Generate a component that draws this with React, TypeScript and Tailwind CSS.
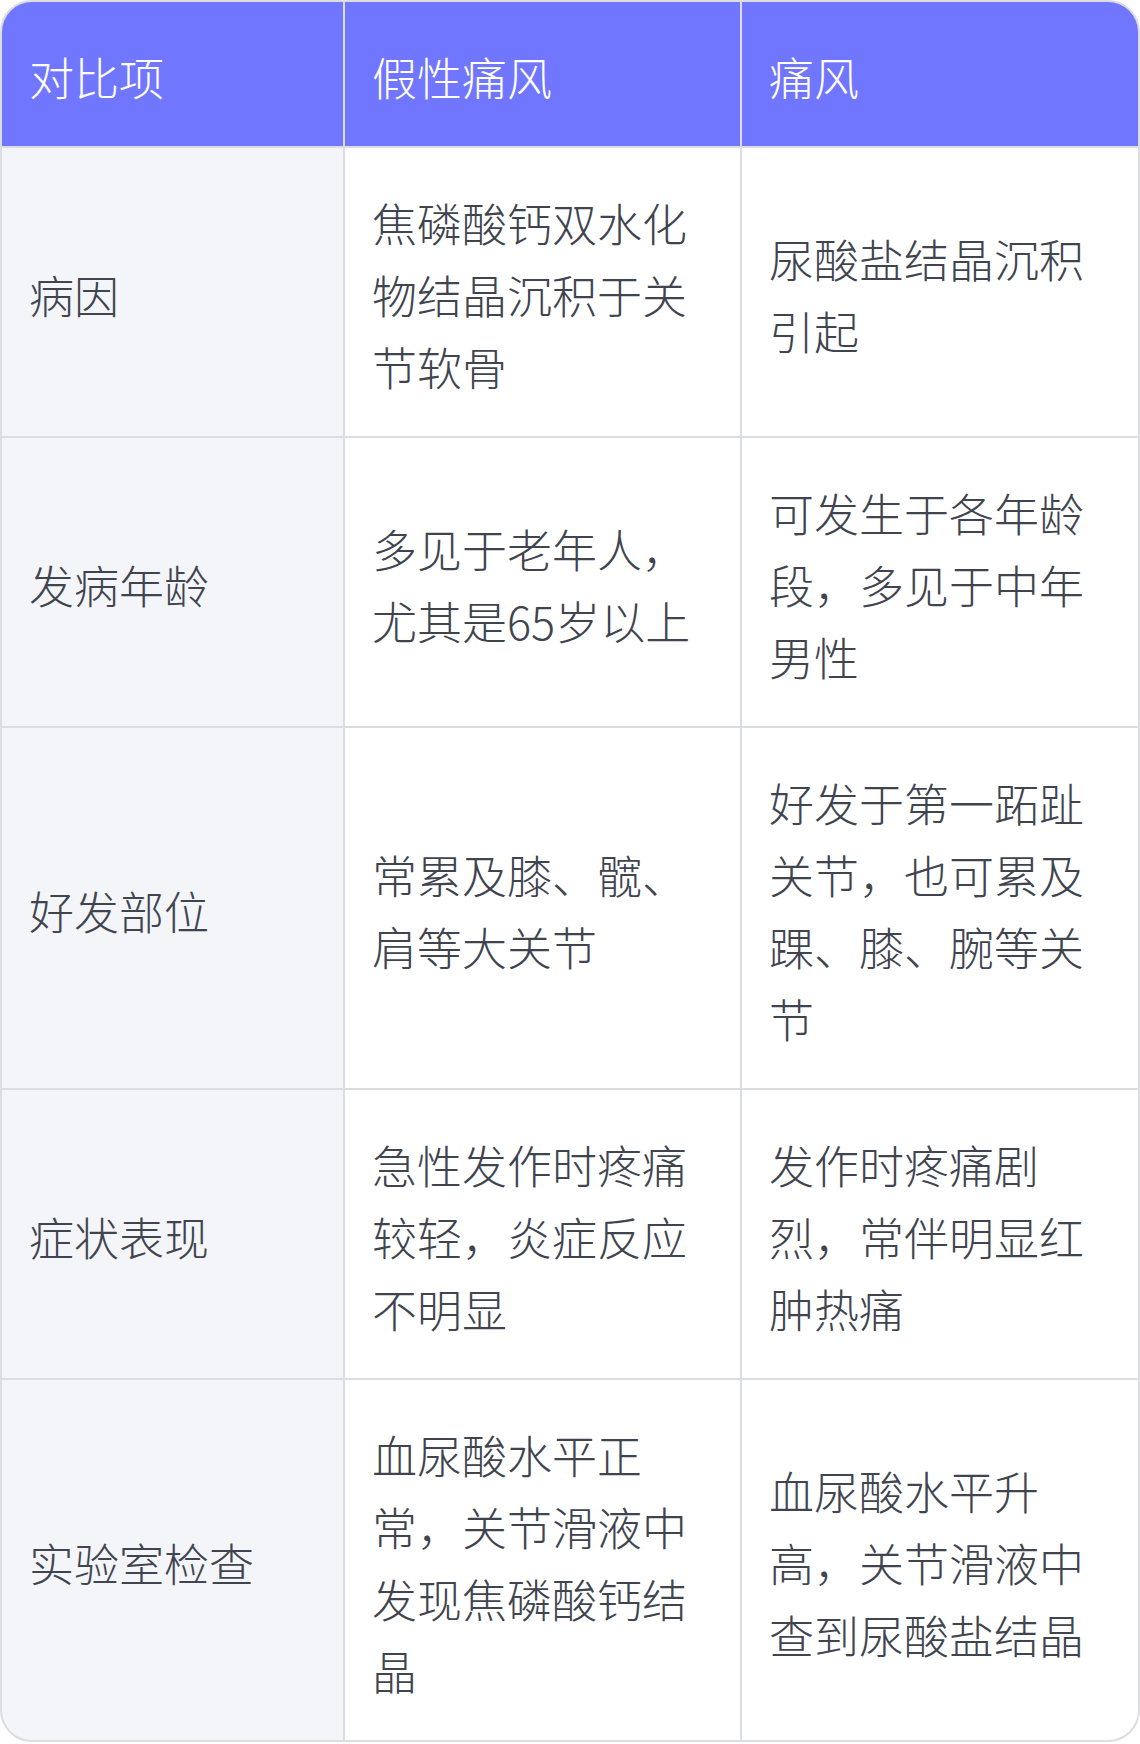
const rows: Array<[string, string, string]> = [
  ['病因', '焦磷酸钙双水化物结晶沉积于关节软骨', '尿酸盐结晶沉积引起'],
  ['发病年龄', '多见于老年人，尤其是65岁以上', '可发生于各年龄段，多见于中年男性'],
  ['好发部位', '常累及膝、髋、肩等大关节', '好发于第一跖趾关节，也可累及踝、膝、腕等关节'],
  ['症状表现', '急性发作时疼痛较轻，炎症反应不明显', '发作时疼痛剧烈，常伴明显红肿热痛'],
  ['实验室检查', '血尿酸水平正常，关节滑液中发现焦磷酸钙结晶', '血尿酸水平升高，关节滑液中查到尿酸盐结晶'],
];

const headers = ['对比项', '假性痛风', '痛风'];

export default function App() {
  return (
    <div className="w-[1140px] bg-white font-['Noto_Sans_CJK_SC',sans-serif] text-[45px] font-light leading-[72px]">
      <div className="grid grid-cols-[341px_395px_396px] gap-[2px] overflow-hidden rounded-[32px] border-2 border-[#dcdde2] bg-[#dcdde2]">
        {headers.map((h) => (
          <div key={h} className="flex items-center bg-[#7176ff] pl-[27px] pr-[28px] pt-[39px] pb-[33px] text-white">
            {h}
          </div>
        ))}
        {rows.map(([item, pseudo, gout]) => (
          <div key={item} className="contents">
            <div className="flex items-center bg-[#f4f5f9] pl-[27px] pr-[28px] pt-[39px] pb-[33px] text-[#40444f]">{item}</div>
            <div className="flex items-center bg-white pl-[27px] pr-[28px] pt-[39px] pb-[33px] text-[#40444f]">{pseudo}</div>
            <div className="flex items-center bg-white pl-[27px] pr-[28px] pt-[39px] pb-[33px] text-[#40444f]">{gout}</div>
          </div>
        ))}
      </div>
    </div>
  );
}
